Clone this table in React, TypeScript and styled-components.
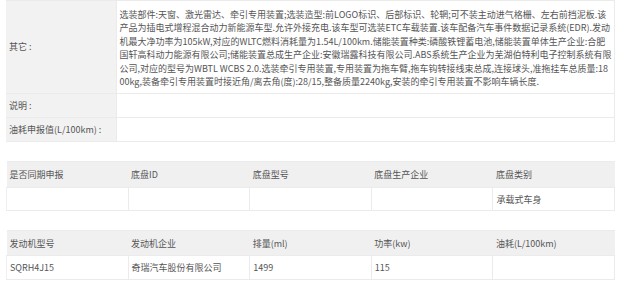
import React from "react";
import styled, { createGlobalStyle } from "styled-components";

const GlobalStyle = createGlobalStyle`
  html, body { margin: 0; padding: 0; background: #fff; }
  body {
    font-family: "Noto Sans CJK SC", "Microsoft YaHei", "Noto Sans", sans-serif;
    font-size: 9px;
    color: #555;
  }
`;

const Page = styled.div`
  width: 620px;
  padding: 0 5px 0 6px;
  box-sizing: border-box;
  display: flex;
  flex-direction: column;
  gap: 19px;
`;

const Table = styled.table`
  width: 609px;
  border-collapse: collapse;
  table-layout: fixed;
`;

const LabelCell = styled.th<{ $h: number }>`
  width: 110px;
  height: ${(p) => p.$h}px;
  box-sizing: border-box;
  background: #f2f2f2;
  border: 1px solid #ebebeb;
  border-left: none;
  text-align: left;
  font-weight: normal;
  padding: 0 3px;
  line-height: 13.4px;
  color: #555;
`;

const ValueCell = styled.td`
  border: 1px solid #ebebeb;
  padding: 7px 3px 4px 3px;
  line-height: 13.4px;
  color: #555;
  vertical-align: top;
`;

const TextLine = styled.span`
  display: block;
  white-space: nowrap;
`;

const HeadCell = styled.th<{ $h: number }>`
  height: ${(p) => p.$h}px;
  box-sizing: border-box;
  background: #f0f0f0;
  border: 1px solid #ebebeb;
  border-left: none;
  border-right: none;
  text-align: left;
  font-weight: normal;
  padding: 0 3px;
  color: #555;
`;

const BodyCell = styled.td<{ $h: number }>`
  height: ${(p) => p.$h}px;
  box-sizing: border-box;
  border: 1px solid #ebebeb;
  padding: 0 3px;
  color: #555;
  &:first-child { border-left: 1px solid #f0f0f0; }
`;

const otherLines = [
  "选装部件:天窗、激光雷达、牵引专用装置;选装造型:前LOGO标识、后部标识、轮辋;可不装主动进气格栅、左右前挡泥板.该",
  "产品为插电式增程混合动力新能源车型.允许外接充电.该车型可选装ETC车载装置.该车配备汽车事件数据记录系统(EDR).发动",
  "机最大净功率为105kW,对应的WLTC燃料消耗量为1.54L/100km.储能装置种类:磷酸铁锂蓄电池,储能装置单体生产企业:合肥",
  "国轩高科动力能源有限公司;储能装置总成生产企业:安徽瑞露科技有限公司.ABS系统生产企业为芜湖伯特利电子控制系统有限",
  "公司,对应的型号为WBTL WCBS 2.0.选装牵引专用装置,专用装置为拖车臂,拖车钩转接线束总成,连接球头,准拖挂车总质量:18",
  "00kg,装备牵引专用装置时接近角/离去角(度):28/15,整备质量2240kg,安装的牵引专用装置不影响车辆长度.",
];

const chassisHead = ["是否同期申报", "底盘ID", "底盘型号", "底盘生产企业", "底盘类别"];
const chassisBody = ["", "", "", "", "承载式车身"];
const engineHead = ["发动机型号", "发动机企业", "排量(ml)", "功率(kw)", "油耗(L/100km)"];
const engineBody = ["SQRH4J15", "奇瑞汽车股份有限公司", "1499", "115", ""];

function GridTable({ head, body, hh, bh }: { head: string[]; body: string[]; hh: number; bh: number }) {
  return (
    <Table>
      <thead>
        <tr>
          {head.map((h, i) => (
            <HeadCell key={i} $h={hh}>{h}</HeadCell>
          ))}
        </tr>
      </thead>
      <tbody>
        <tr>
          {body.map((b, i) => (
            <BodyCell key={i} $h={bh}>{b}</BodyCell>
          ))}
        </tr>
      </tbody>
    </Table>
  );
}

export default function App() {
  return (
    <>
      <GlobalStyle />
      <Page>
        <Table>
          <tbody>
            <tr>
              <LabelCell $h={93}>其它 :</LabelCell>
              <ValueCell>
                {otherLines.map((l, i) => (
                  <TextLine key={i}>{l}</TextLine>
                ))}
              </ValueCell>
            </tr>
            <tr>
              <LabelCell $h={24}>说明 :</LabelCell>
              <ValueCell />
            </tr>
            <tr>
              <LabelCell $h={24}>油耗申报值(L/100km) :</LabelCell>
              <ValueCell />
            </tr>
          </tbody>
        </Table>
        <GridTable head={chassisHead} body={chassisBody} hh={26} bh={23} />
        <GridTable head={engineHead} body={engineBody} hh={25} bh={24} />
      </Page>
    </>
  );
}
